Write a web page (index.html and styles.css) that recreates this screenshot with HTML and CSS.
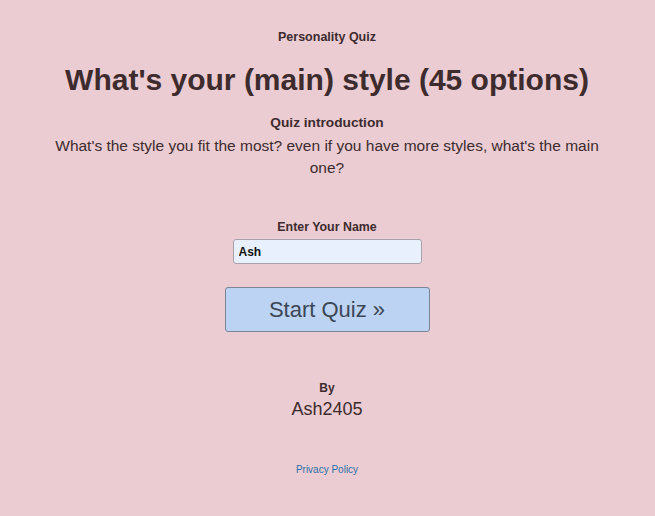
FILE: index.html
```html
<!DOCTYPE html>
<html>
<head>
<meta charset="utf-8">
<link rel="stylesheet" href="styles.css">
</head>
<body>
<main class="page">
  <div class="kicker">Personality Quiz</div>
  <h1 class="title">What's your (main) style (45 options)</h1>
  <div class="intro-label">Quiz introduction</div>
  <p class="intro">What's the style you fit the most? even if you have more styles, what's the main one?</p>
  <form class="start">
    <label class="name-label" for="name">Enter Your Name</label>
    <input class="name-input" id="name" type="text" value="Ash">
    <button class="start-btn" type="button">Start Quiz &raquo;</button>
  </form>
  <div class="by">By</div>
  <div class="author">Ash2405</div>
  <a class="privacy" href="#">Privacy Policy</a>
</main>
</body>
</html>
```
FILE: styles.css
```css
html, body {
  margin: 0;
  padding: 0;
  background: #ebccd2;
}
body {
  font-family: "Liberation Sans", Arial, sans-serif;
  color: #3d2b2e;
  padding-right: 1px;
}
.page {
  width: 600px;
  margin: 0 auto;
  padding-top: 29px;
  display: flex;
  flex-direction: column;
  align-items: center;
  text-align: center;
}
.kicker {
  font-size: 12.5px;
  font-weight: bold;
  line-height: 16px;
}
.title {
  font-size: 30px;
  font-weight: bold;
  margin: 18px 0 0;
  line-height: 34px;
}
.intro-label {
  font-size: 13.7px;
  font-weight: bold;
  margin-top: 18px;
  line-height: 16px;
}
.intro {
  font-size: 15.5px;
  line-height: 22px;
  margin: 4px 0 0;
  width: 570px;
}
.start {
  display: flex;
  flex-direction: column;
  align-items: center;
  margin-top: 40px;
}
.name-label {
  font-size: 12.4px;
  font-weight: bold;
  line-height: 16px;
}
.name-input {
  box-sizing: border-box;
  width: 189px;
  height: 25px;
  margin-top: 4px;
  padding: 0 5px;
  border: 1px solid #a7a2a8;
  border-radius: 3px;
  background: #e8f0fe;
  font-family: "Liberation Sans", Arial, sans-serif;
  font-size: 12px;
  font-weight: bold;
  color: #111;
}
.start-btn {
  box-sizing: border-box;
  width: 205px;
  height: 45px;
  margin-top: 23px;
  border: 1px solid #7b8494;
  border-radius: 3px;
  background: #bdd3f3;
  font-family: "Liberation Sans", Arial, sans-serif;
  font-size: 22px;
  color: #3b4656;
}
.by {
  margin-top: 48px;
  font-size: 12px;
  font-weight: bold;
  line-height: 16px;
}
.author {
  font-size: 18px;
  line-height: 22px;
  margin-top: 2px;
}
.privacy {
  margin-top: 44px;
  font-size: 10px;
  color: #2c6fa6;
  text-decoration: none;
}
```
